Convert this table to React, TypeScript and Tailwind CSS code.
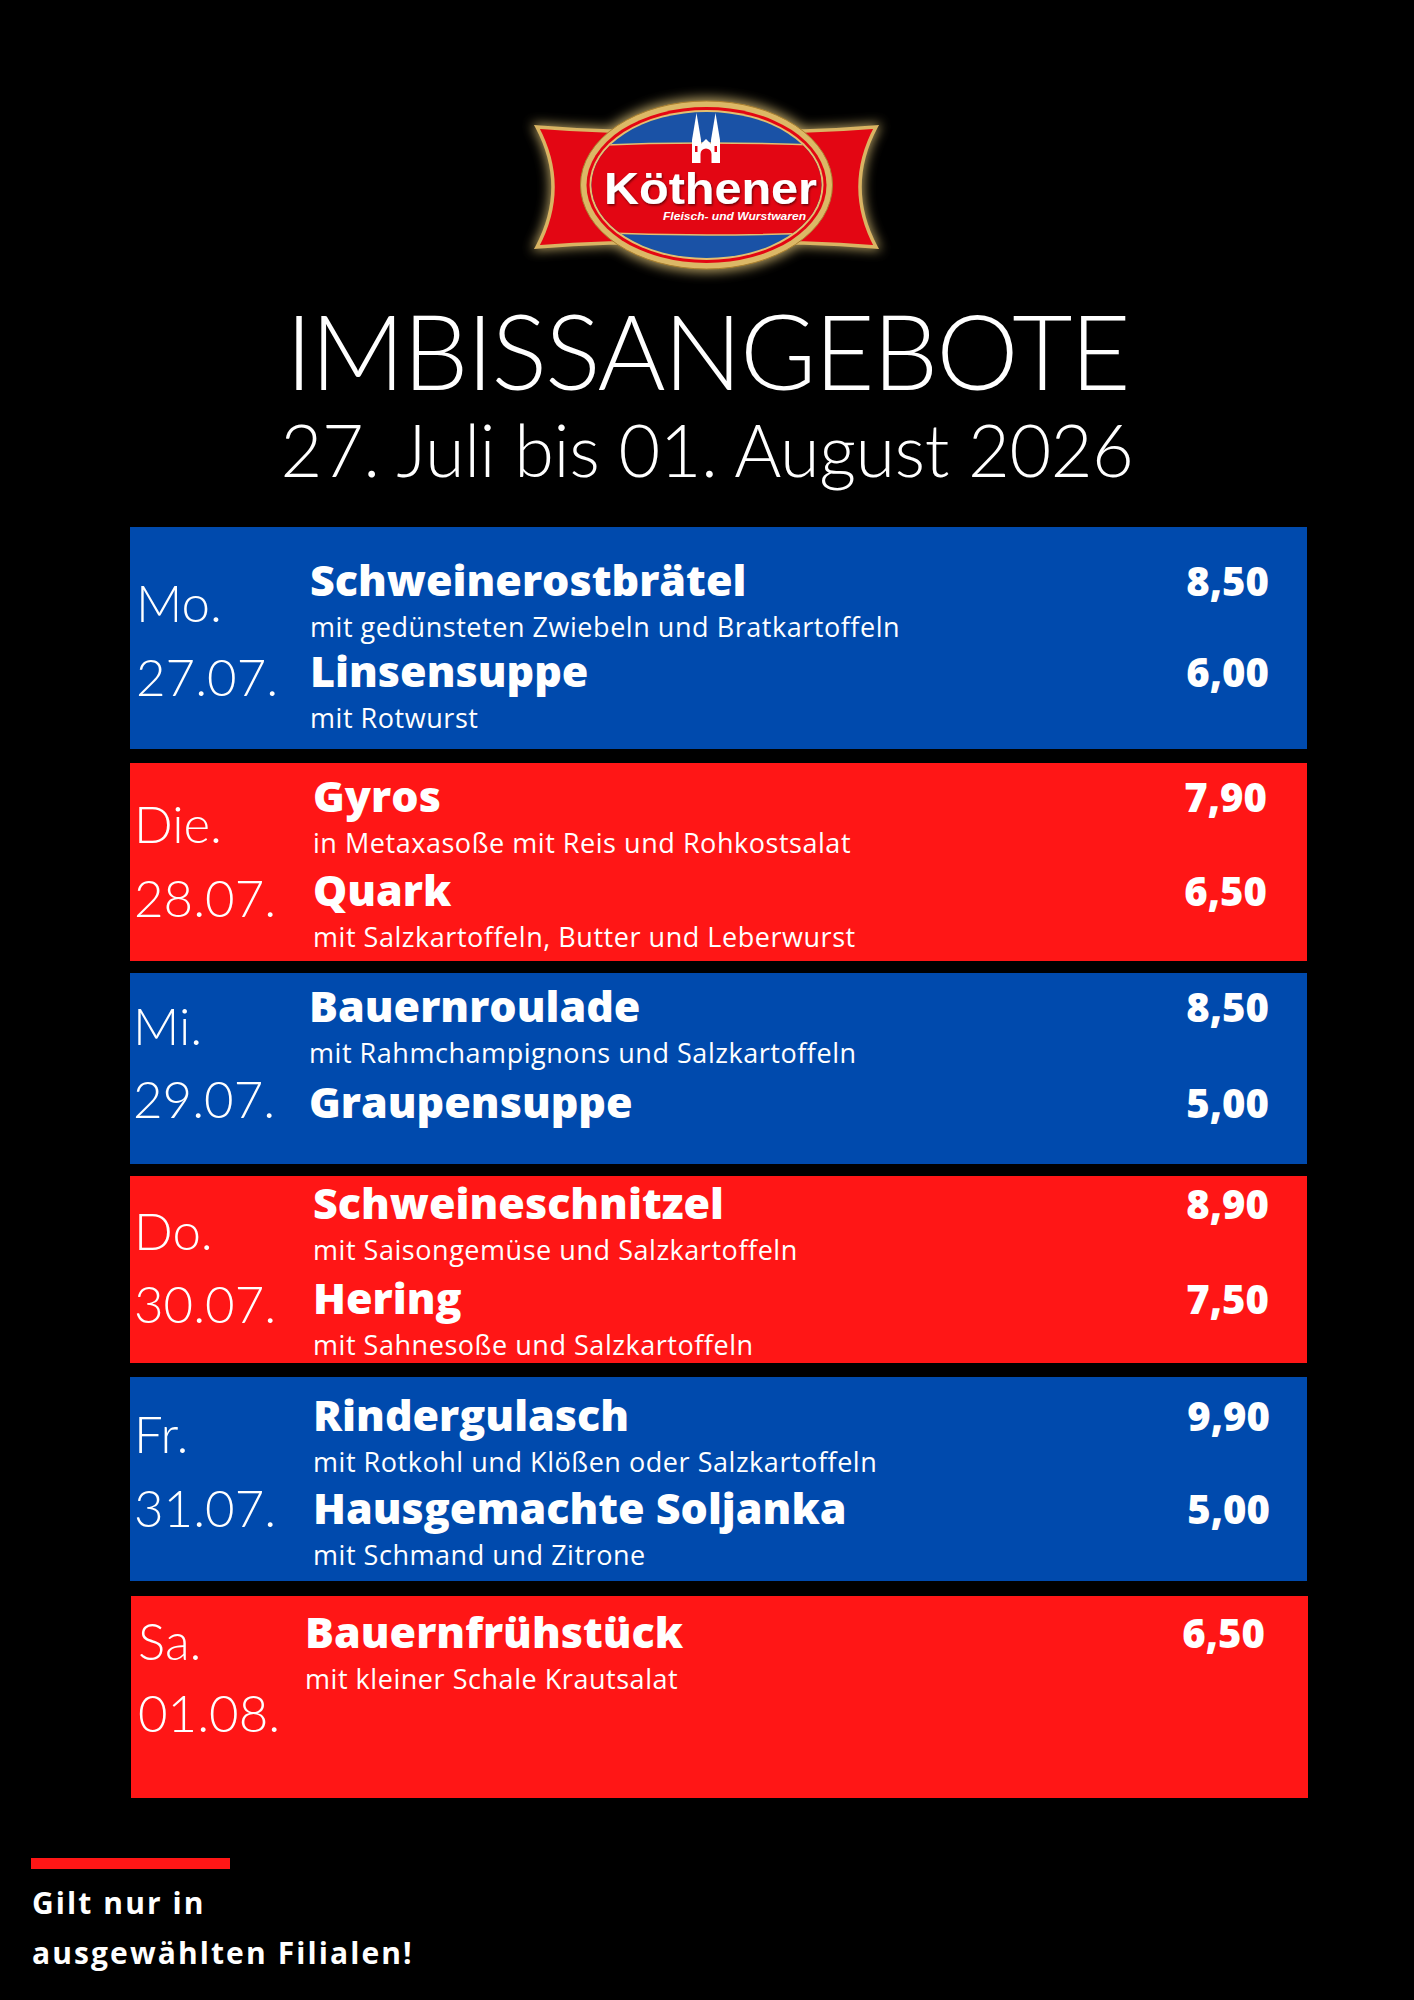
import React from "react";

type Item = { t: string; s?: string; p: string };
type Day = {
  day: string;
  date: string;
  bg: string;
  box: string;
  pt: string;
  gap: string;
  dayTop: string;
  dayGap: string;
  dayCol: string;
  pr: string;
  items: Item[];
};

const days: Day[] = [
  {
    day: "Mo.",
    date: "27.07.",
    bg: "bg-[#004aad]",
    box: "h-[222px] mt-0",
    pt: "pt-[31px]",
    gap: "gap-[9px]",
    dayTop: "pt-[51px]",
    dayGap: "gap-[24px]",
    dayCol: "w-[180px] pl-[6px]",
    pr: "pr-[38px]",
    items: [
      { t: "Schweinerostbrätel", s: "mit gedünsteten Zwiebeln und Bratkartoffeln", p: "8,50" },
      { t: "Linsensuppe", s: "mit Rotwurst", p: "6,00" },
    ],
  },
  {
    day: "Die.",
    date: "28.07.",
    bg: "bg-[#ff1616]",
    box: "h-[198px] mt-[14px]",
    pt: "pt-[11px]",
    gap: "gap-[12px]",
    dayTop: "pt-[36px]",
    dayGap: "gap-[24px]",
    dayCol: "w-[183px] pl-[4px]",
    pr: "pr-[40px]",
    items: [
      { t: "Gyros", s: "in Metaxasoße mit Reis und Rohkostsalat", p: "7,90" },
      { t: "Quark", s: "mit Salzkartoffeln, Butter und Leberwurst", p: "6,50" },
    ],
  },
  {
    day: "Mi.",
    date: "29.07.",
    bg: "bg-[#004aad]",
    box: "h-[191px] mt-[12px]",
    pt: "pt-[11px]",
    gap: "gap-[14px]",
    dayTop: "pt-[28px]",
    dayGap: "gap-[23px]",
    dayCol: "w-[179px] pl-[3px]",
    pr: "pr-[38px]",
    items: [
      { t: "Bauernroulade", s: "mit Rahmchampignons und Salzkartoffeln", p: "8,50" },
      { t: "Graupensuppe", p: "5,00" },
    ],
  },
  {
    day: "Do.",
    date: "30.07.",
    bg: "bg-[#ff1616]",
    box: "h-[187px] mt-[12px]",
    pt: "pt-[5px]",
    gap: "gap-[13px]",
    dayTop: "pt-[30px]",
    dayGap: "gap-[23px]",
    dayCol: "w-[183px] pl-[4px]",
    pr: "pr-[38px]",
    items: [
      { t: "Schweineschnitzel", s: "mit Saisongemüse und Salzkartoffeln", p: "8,90" },
      { t: "Hering", s: "mit Sahnesoße und Salzkartoffeln", p: "7,50" },
    ],
  },
  {
    day: "Fr.",
    date: "31.07.",
    bg: "bg-[#004aad]",
    box: "h-[204px] mt-[14px]",
    pt: "pt-[16px]",
    gap: "gap-[11px]",
    dayTop: "pt-[32px]",
    dayGap: "gap-[24px]",
    dayCol: "w-[183px] pl-[4px]",
    pr: "pr-[37px]",
    items: [
      { t: "Rindergulasch", s: "mit Rotkohl und Klößen oder Salzkartoffeln", p: "9,90" },
      { t: "Hausgemachte Soljanka", s: "mit Schmand und Zitrone", p: "5,00" },
    ],
  },
  {
    day: "Sa.",
    date: "01.08.",
    bg: "bg-[#ff1616]",
    box: "h-[202px] mt-[15px] ml-[1px]",
    pt: "pt-[14px]",
    gap: "gap-[12px]",
    dayTop: "pt-[20px]",
    dayGap: "gap-[22px]",
    dayCol: "w-[174px] pl-[7px]",
    pr: "pr-[43px]",
    items: [{ t: "Bauernfrühstück", s: "mit kleiner Schale Krautsalat", p: "6,50" }],
  },
];

function Logo() {
  const ribbon =
    "M0,27 Q36,30 72,31 L267,31 Q303,30 339,27 Q307,87 339,147 Q303,144 267,143 L72,143 Q36,144 0,147 Q32,87 0,27 Z";
  return (
    <svg width="370" height="200" viewBox="0 0 370 200" className="block">
      <defs>
        <filter id="glow" x="-20%" y="-20%" width="140%" height="140%">
          <feGaussianBlur stdDeviation="6" />
        </filter>
        <filter id="tshadow" x="-10%" y="-30%" width="120%" height="160%">
          <feDropShadow dx="1" dy="1.5" stdDeviation="0.8" floodColor="#4a0000" floodOpacity="0.8" />
        </filter>
        <clipPath id="inner">
          <ellipse cx="169.5" cy="85" rx="115" ry="73" />
        </clipPath>
      </defs>
      <g transform="translate(15,15)">
        <g filter="url(#glow)" opacity="0.75">
          <path d={ribbon} fill="#f3d684" stroke="#f3d684" strokeWidth="6" />
          <ellipse cx="169.5" cy="85" rx="129" ry="87" fill="#f3d684" />
        </g>
        <path d={ribbon} fill="#e30613" stroke="#d9b463" strokeWidth="3.5" />
        <ellipse cx="169.5" cy="85" rx="126" ry="84" fill="#dcb866" stroke="#a97f2f" strokeWidth="1" />
        <ellipse cx="169.5" cy="85" rx="120" ry="78" fill="#e30613" />
        <ellipse cx="169.5" cy="85" rx="117" ry="75" fill="#e2c070" />
        <g clipPath="url(#inner)">
          <rect x="40" y="0" width="260" height="170" fill="#1a52a6" />
          <path d="M40,46 Q169.5,40 300,46 L300,132 Q169.5,138 40,132 Z" fill="#e30613" stroke="#e2c070" strokeWidth="1.5" />
        </g>
        <g fill="#ffffff">
          <polygon points="159.5,13 155,40 164,40" />
          <polygon points="178.5,13 174,40 183,40" />
          <rect x="155" y="40" width="9" height="23" />
          <rect x="174" y="40" width="9" height="23" />
          <polygon points="164,44 169,39 174,44 174,63 164,63" />
        </g>
        <path d="M163.5,63 V54 A5.5,5.5 0 0 1 174.5,54 V63 Z" fill="#e30613" />
        <rect x="158" y="46" width="2.5" height="6" fill="#e30613" />
        <rect x="177.5" y="46" width="2.5" height="6" fill="#e30613" />
        <text
          x="67"
          y="104"
          textLength="213"
          lengthAdjust="spacingAndGlyphs"
          fill="#ffffff"
          filter="url(#tshadow)"
          style={{ fontFamily: "'Liberation Sans', Arial, sans-serif", fontWeight: 700, fontSize: 45 }}
        >
          Köthener
        </text>
        <text
          x="126"
          y="120"
          textLength="143"
          lengthAdjust="spacingAndGlyphs"
          fill="#ffffff"
          style={{ fontFamily: "'Liberation Sans', Arial, sans-serif", fontWeight: 700, fontStyle: "italic", fontSize: 11 }}
        >
          Fleisch- und Wurstwaren
        </text>
      </g>
    </svg>
  );
}

function Panel({ d }: { d: Day }) {
  return (
    <div className={`flex w-[1177px] ${d.bg} ${d.box} text-white`}>
      <div className={`flex shrink-0 flex-col ${d.dayCol} ${d.dayTop} ${d.dayGap} font-['Lato',sans-serif] text-[51px] font-light leading-[50px]`}>
        <div>{d.day}</div>
        <div>{d.date}</div>
      </div>
      <div className={`flex flex-1 flex-col ${d.pr} ${d.pt} ${d.gap}`}>
        {d.items.map((it) => (
          <div key={it.t} className="flex flex-col">
            <div className="flex items-baseline justify-between">
              <div className="font-['Open_Sans',sans-serif] text-[43px] font-extrabold leading-[44px]">{it.t}</div>
              <div className="font-['Open_Sans',sans-serif] text-[40px] font-extrabold leading-[44px]">{it.p}</div>
            </div>
            {it.s && (
              <div className="mt-[11px] font-['Open_Sans',sans-serif] text-[27px] font-normal leading-[26px] tracking-[0.02em]">
                {it.s}
              </div>
            )}
          </div>
        ))}
      </div>
    </div>
  );
}

export default function App() {
  return (
    <div className="min-h-[2000px] w-[1414px] bg-black pt-[85px] text-white">
      <div className="flex justify-center">
        <Logo />
      </div>
      <div className="mt-[13px] text-center font-['Lato',sans-serif] text-[104px] font-light leading-[104px] tracking-[-0.02em]">
        IMBISSANGEBOTE
      </div>
      <div className="mt-[11px] text-center font-['Lato',sans-serif] text-[72px] font-light leading-[72px] tracking-[-0.006em]">
        27. Juli bis 01. August 2026
      </div>
      <div className="mt-[42px] flex flex-col pl-[130px]">
        {days.map((d) => (
          <Panel key={d.date} d={d} />
        ))}
      </div>
      <div className="mt-[60px] ml-[31px] h-[11px] w-[199px] bg-[#ff1616]" />
      <div className="mt-[9px] pl-[32px] font-['Open_Sans',sans-serif] text-[30px] font-bold leading-[50px] tracking-[0.07em]">
        <div>Gilt nur in</div>
        <div>ausgewählten Filialen!</div>
      </div>
    </div>
  );
}
